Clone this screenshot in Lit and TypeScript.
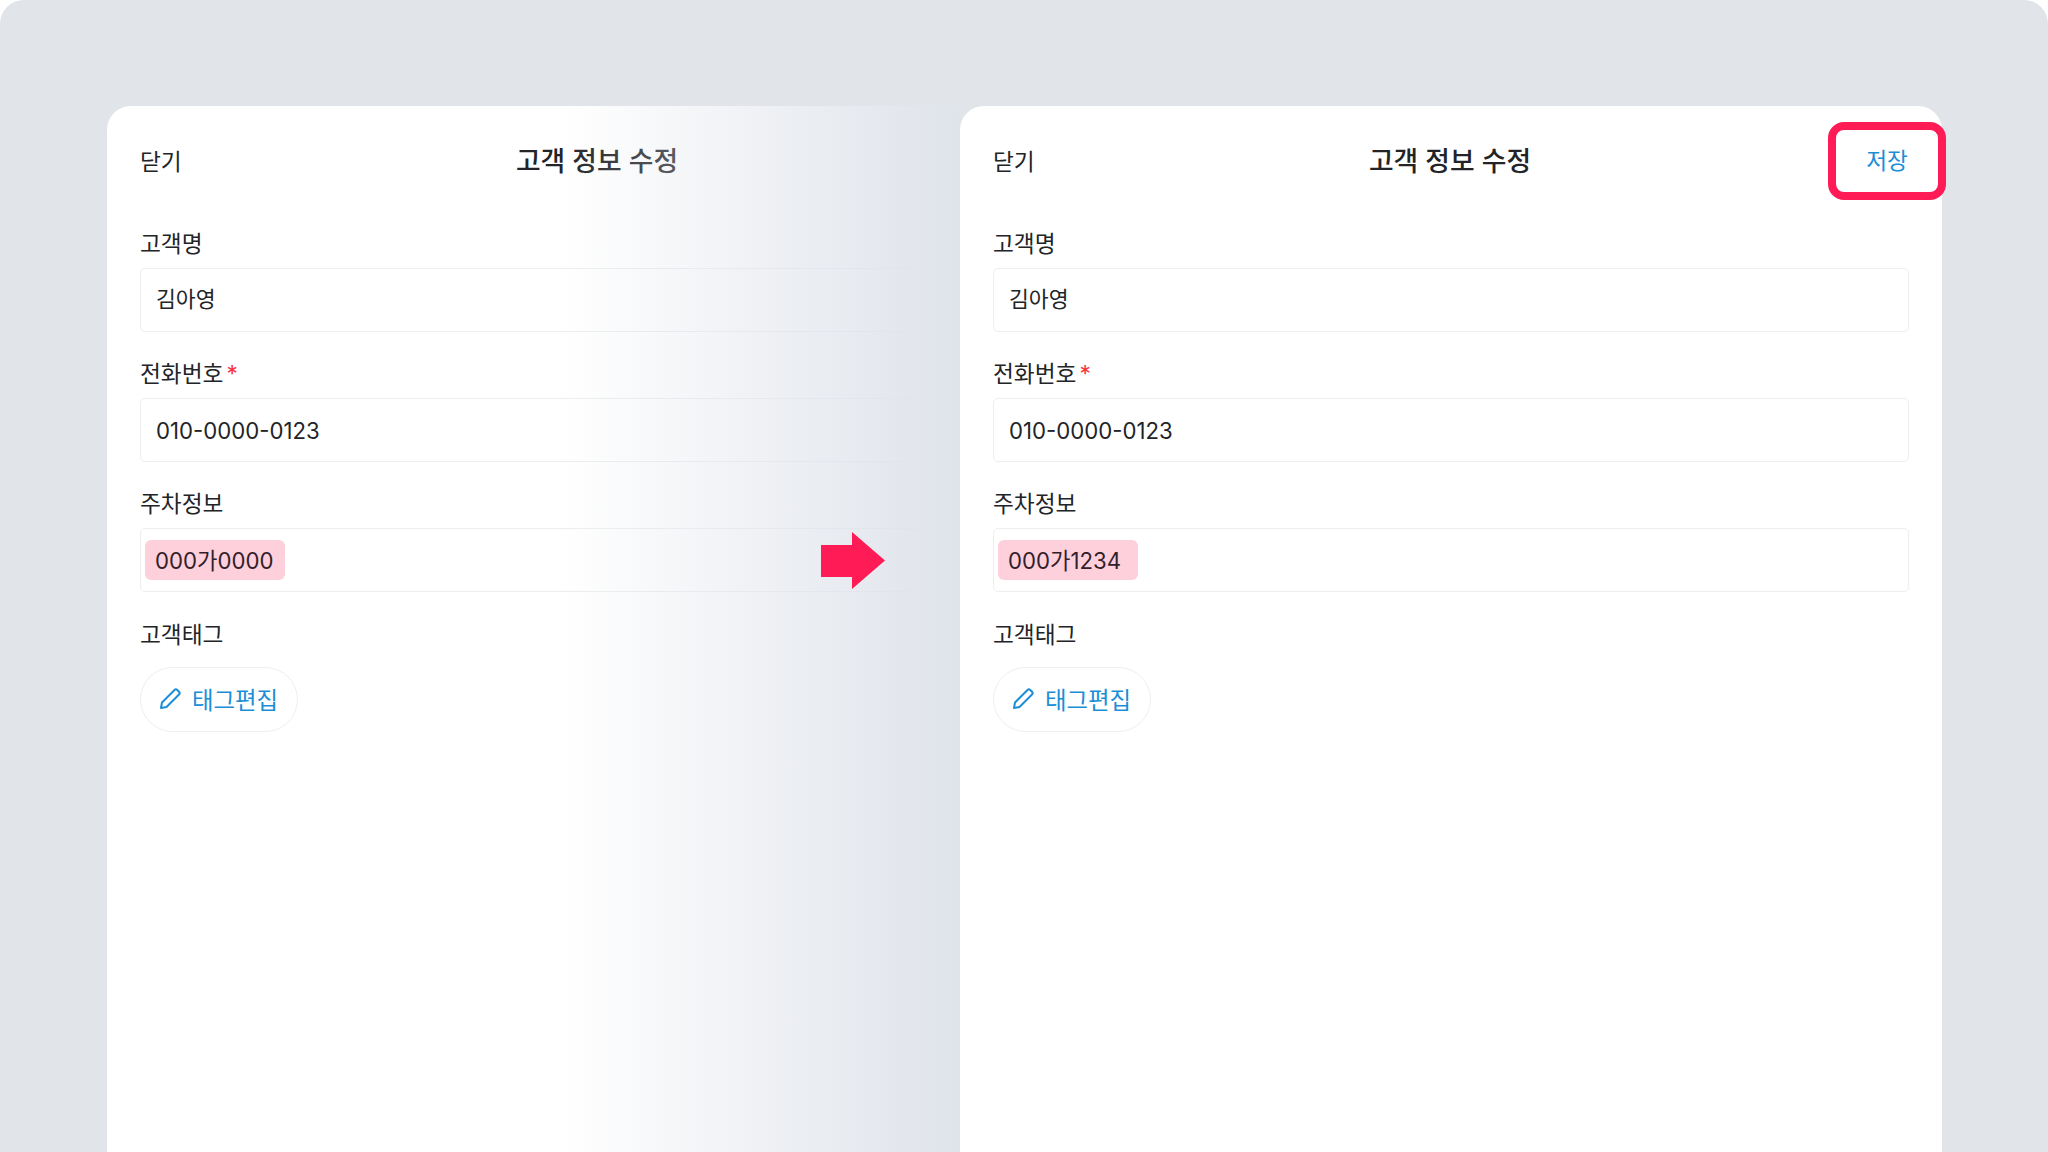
import { LitElement, html, css } from 'lit'
import { customElement, property } from 'lit/decorators.js'

@customElement('edit-card')
export class EditCard extends LitElement {
  @property({ type: String }) plate = ''
  @property({ type: Boolean }) saveable = false

  static styles = css`
    :host {
      display: block;
      width: 982px;
      height: 1046px;
      background: #ffffff;
      border-radius: 24px 24px 0 0;
      box-sizing: border-box;
      padding: 0 33px;
      color: #222427;
      font-family: Inter, 'Noto Sans CJK KR', sans-serif;
      font-size: 22.2px;
    }

    .header {
      height: 110px;
      box-sizing: border-box;
      padding-bottom: 2px;
      display: grid;
      grid-template-columns: 1fr auto 1fr;
      align-items: center;
      font-size: 22.7px;
    }

    .title {
      font-size: 26.8px;
      font-weight: 500;
      padding: 0 2px 2px 0;
    }

    .save {
      justify-self: end;
      position: relative;
      margin-right: 1px;
      padding-top: 2px;
      line-height: 30px;
      color: #1b8ed6;
    }

    .save::after {
      content: '';
      position: absolute;
      left: -38px;
      right: -38px;
      top: -22px;
      bottom: -24px;
      border: 8px solid #ff1b56;
      border-radius: 16px;
    }

    .group {
      margin-top: 12px;
      margin-bottom: 26px;
    }

    label {
      display: block;
      height: 30px;
      line-height: 32px;
      margin-bottom: 10px;
      font-size: 22.7px;
    }

    .required {
      color: #f5333f;
      margin-left: 3px;
    }

    .field {
      height: 64px;
      box-sizing: border-box;
      border: 1px solid #eceef1;
      border-radius: 5px;
      padding: 0 15px;
      display: flex;
      align-items: center;
    }

    .field.name {
      padding-bottom: 5px;
      font-size: 21.6px;
    }

    .field.plates {
      padding: 0 4px;
    }

    .chip {
      width: 140px;
      height: 40px;
      box-sizing: border-box;
      padding: 0 10px 3px;
      display: flex;
      align-items: center;
      background: #fdd0dc;
      border-radius: 6px;
      color: #33202a;
    }

    .tag-button {
      margin-top: 18px;
      width: 158px;
      height: 65px;
      box-sizing: border-box;
      border: 1px solid #eceef1;
      border-radius: 33px;
      padding: 0 2px 2px 0;
      display: flex;
      align-items: center;
      justify-content: center;
      gap: 10px;
      color: #1b8ed6;
      font-size: 23.4px;
    }

    .tag-button svg {
      width: 24px;
      height: 24px;
    }

    .tag-group {
      margin-top: 27px;
    }
  `

  render() {
    return html`
      <div class="header">
        <span>닫기</span>
        <span class="title">고객 정보 수정</span>
        ${this.saveable ? html`<span class="save">저장</span>` : ''}
      </div>
      <div class="group">
        <label>고객명</label>
        <div class="field name">김아영</div>
      </div>
      <div class="group">
        <label>전화번호<span class="required">*</span></label>
        <div class="field">010-0000-0123</div>
      </div>
      <div class="group">
        <label>주차정보</label>
        <div class="field plates"><span class="chip">${this.plate}</span></div>
      </div>
      <div class="group tag-group">
        <label>고객태그</label>
        <div class="tag-button">
          <svg viewBox="0 0 24 24" fill="none" stroke="currentColor" stroke-width="2" stroke-linejoin="round">
            <path d="M3 21l1-5.5L16.5 3a2 2 0 0 1 2.8 0l1.7 1.7a2 2 0 0 1 0 2.8L8.5 20z" />
          </svg>
          태그편집
        </div>
      </div>
    `
  }
}

@customElement('app-root')
export class AppRoot extends LitElement {
  static styles = css`
    :host {
      display: block;
      width: 2048px;
      height: 1152px;
      overflow: hidden;
      background: #ffffff;
    }

    .stage {
      height: 100%;
      box-sizing: border-box;
      padding: 106px 0 0 107px;
      display: flex;
      background: #e1e4e9;
      border-radius: 24px 24px 0 0;
    }

    .before {
      position: relative;
      width: 853px;
      overflow: hidden;
      flex: none;
    }

    /* fades the cut off card into the background */
    .before::after {
      content: '';
      position: absolute;
      top: 0;
      right: 0;
      bottom: 0;
      width: 400px;
      background: linear-gradient(to right, rgba(223, 227, 234, 0), #dfe3ea);
    }

    .arrow {
      position: absolute;
      left: 821px;
      top: 532px;
      width: 64px;
      height: 57px;
    }
  `

  render() {
    return html`
      <div class="stage">
        <div class="before">
          <edit-card plate="000가0000"></edit-card>
        </div>
        <edit-card plate="000가1234" saveable></edit-card>
        <svg class="arrow" viewBox="0 0 64 57">
          <path d="M0 13h31V0l33 28.5L31 57V45H0z" fill="#ff1b56" />
        </svg>
      </div>
    `
  }
}
